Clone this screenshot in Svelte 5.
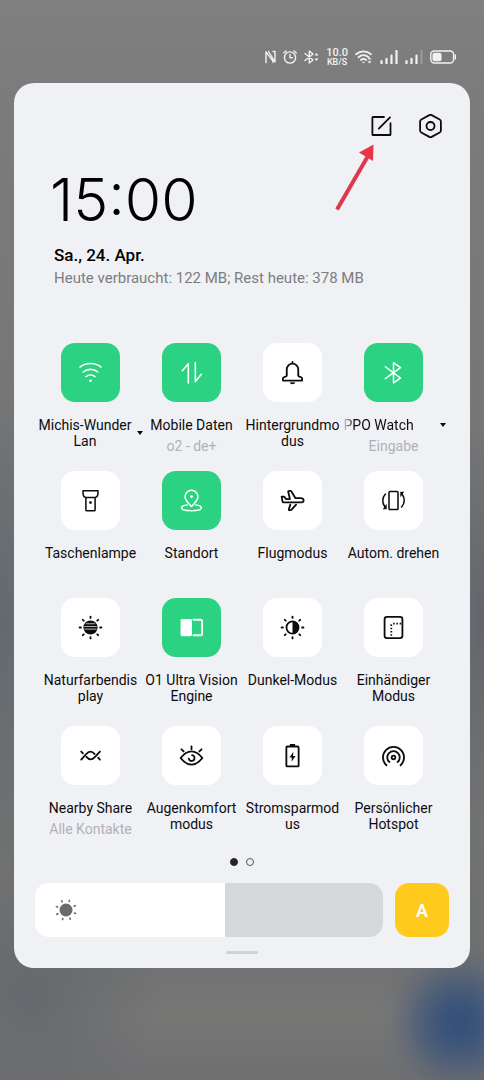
<script>
  let brightness = $state(54.6);
  let auto = $state(true);
  let tiles = $state([
    { icon: 'wifi', label: 'Michis-Wunder\nLan', on: true, menu: true },
    { icon: 'data', label: 'Mobile Daten', sub: 'o2 - de+', on: true },
    { icon: 'bell', label: 'Hintergrundmo\ndus' },
    { icon: 'bluetooth', label: 'PPO Watch', sub: 'Eingabe', on: true, menu: true, fading: true },
    { icon: 'torch', label: 'Taschenlampe' },
    { icon: 'location', label: 'Standort', on: true },
    { icon: 'plane', label: 'Flugmodus' },
    { icon: 'rotate', label: 'Autom. drehen' },
    { icon: 'natural', label: 'Naturfarbendis\nplay' },
    { icon: 'vision', label: 'O1 Ultra Vision\nEngine', on: true },
    { icon: 'dark', label: 'Dunkel-Modus' },
    { icon: 'onehand', label: 'Einhändiger\nModus' },
    { icon: 'nearby', label: 'Nearby Share', sub: 'Alle Kontakte' },
    { icon: 'eye', label: 'Augenkomfort\nmodus' },
    { icon: 'battery', label: 'Stromsparmod\nus' },
    { icon: 'hotspot', label: 'Persönlicher\nHotspot' }
  ]);
  const rays = [0, 45, 90, 135, 180, 225, 270, 315];
</script>

{#snippet glyph(name)}
  <svg class="glyph" viewBox="0 0 24 24" aria-hidden="true">
    {#if name === 'wifi'}
      <path d="M1 6.3C7.3 1.5 16.7 1.5 23 6.3M4.4 11.5C8.7 7.8 15.3 7.8 19.6 11.5M7.3 16.3C10 14 14 14 16.7 16.3" />
      <circle class="solid" cx="12" cy="20.6" r="1.4" />
    {:else if name === 'data'}
      <path d="M2.4 10.2 8.7 2.8V23M16 1.7V21.6L22.2 13.8" />
    {:else if name === 'bell'}
      <path class="thick" d="M6 8.7v6.6c-.4 1.6-4 .9-4 2.9v2.2h20v-2.2c0-2-3.6-1.3-4-2.9V8.7a6 6 0 0 0-12 0zM12 1v1.5M10.5 23q1.5.8 3 0" />
    {:else if name === 'bluetooth'}
      <path d="M3.5 6 19.3 17.8 12 22.8V1.8L19.3 6.8 3.5 18.4" />
    {:else if name === 'torch'}
      <path d="M4.2 1.8h15.6v2.4c0 2.6-1.2 4.6-3.4 4.6H7.6c-2.2 0-3.4-2-3.4-4.6zM7.2 9.4v12.4q0 1 1 1h7.6q1 0 1-1V9.4" />
      <circle class="solid" cx="12" cy="14.2" r="1.5" />
    {:else if name === 'location'}
      <path d="M12 18.2C9.5 15.7 5.3 12 5.3 8.1a6.7 6.7 0 0 1 13.4 0C18.7 12 14.5 15.7 12 18.2zM7.5 16.8C4 17.2 1.7 18.3 1.7 19.7c0 1.8 4.6 3 10.3 3s10.3-1.2 10.3-3c0-1.4-2.3-2.5-5.8-2.9" />
      <circle class="solid" cx="12" cy="8" r="1.5" />
    {:else if name === 'plane'}
      <path class="thick" d="M.7 8h2.5l2.2 2.5H9.3L7.6 3.2Q7.4 2 8.6 2h1.3q.7 0 1 .6l4.2 7h5.4q2.9 0 3.1 2.3.1 2-2.2 2H3Q1.8 14 1.5 12.7zM9.7 16.3 8.2 21.2q-.2.9.7.9h1.2q.5 0 .8-.4l4.8-5.4" />
    {:else if name === 'rotate'}
      <rect x="7.3" y="2.5" width="9.4" height="19" rx="1" />
      <path d="M3.6 5.2C0 9 0 14.5 2.8 18.3M20.4 18.8C24 15 24 9.5 21.2 5.7" />
      <path class="solid" d="M4.9 15.5v5.6H.8zM19.1 8.5V2.9h4.1z" />
    {:else if name === 'natural'}
      <circle class="solid" cx="12" cy="12" r="7.4" />
      <path class="stripes" d="M7.5 8.1h9M6 11h12M6 13.7h12" />
      {#each rays as r}<path class="thick" d="M12 .6v1.4" transform={`rotate(${r} 12 12)`} />{/each}
    {:else if name === 'vision'}
      <rect class="solid" x=".6" y="3" width="11.9" height="18" rx="1.5" />
      <path class="thick" d="M14 3.9h7.4q1.7 0 1.7 1.7v12.8q0 1.7-1.7 1.7H14" />
    {:else if name === 'dark'}
      <circle class="thick" cx="12" cy="12" r="6.3" />
      <path class="solid" d="M12 5.7a6.3 6.3 0 0 1 0 12.6z" />
      {#each rays as r}<path class="thick" d="M12 .6v1.4" transform={`rotate(${r} 12 12)`} />{/each}
    {:else if name === 'onehand'}
      <rect class="thick" x="2.7" y=".9" width="18.6" height="22.2" rx="2.5" />
      <path class="dots" d="M20 8h-8.7q-1.6 0-1.6 1.6V22" />
    {:else if name === 'nearby'}
      <path class="thick" d="M2.3 16.2 7.5 10.5Q12 5.6 16.2 10.4M7.8 13.5Q12 18.4 16.5 13.6L21.8 7.9M2.3 7.9l1.8 1.9M20 14.3l1.8 1.9" />
    {:else if name === 'eye'}
      <path class="thick" d="M.7 14.6C4.5 9.7 8 7.7 12 7.7s7.5 2 11.3 6.9C19.5 19.5 16 21.5 12 21.5S4.5 19.5.7 14.6zM12.6 11.7a3 3 0 1 1-3.4 3.5" />
      <path class="thick" d="M12 2.4v3M1.5 5.5l2.3 2.3M22.5 5.5 20.2 7.8" />
    {:else if name === 'battery'}
      <rect class="thick" x="5.6" y="2.6" width="12.8" height="20.8" rx="1" />
      <path class="solid" d="M9.3 0h5.4v2.5H9.3zM13 8.2l-4.2 6h2.6l-.5 4.3 4.3-6h-2.7z" />
    {:else if name === 'hotspot'}
      <path class="thick" d="M4.6 22.2a11 11 0 1 1 14.8 0M7.7 18.8a6.5 6.5 0 1 1 8.6 0" />
      <circle class="thick" cx="12" cy="14" r="1.9" />
    {/if}
  </svg>
{/snippet}

<main class="screen">
  <div class="status">
    <svg width="11" height="14" viewBox="0 0 11 14" aria-hidden="true"><path d="M1 12.5V1.8L8 11V12.5M3.5 1.5 10 12V1.5H8" /></svg>
    <svg width="14" height="14" viewBox="0 0 14 14" aria-hidden="true"><circle cx="7" cy="7.5" r="5.6" /><path d="M7 4.5v3.3h2.3M.8 2.8 3 1M13.2 2.8 11 1" /></svg>
    <svg width="15" height="14" viewBox="0 0 15 14" aria-hidden="true"><path d="M1 3.5 9 10 5.3 13V1L9 4 1 10.5" /><path class="fill" d="M10.5 5.5 12.5 3l2 2.500zM10.5 8.5l2 2.5 2-2.500z" /></svg>
    <span class="rate"><b>10.0</b><small>KB/S</small></span>
    <svg class="wifi" width="18" height="14" viewBox="0 0 18 14" aria-hidden="true"><path d="M1 4.2C5.5.3 11.5.3 16 4.2M3.5 7.2C6.5 4.6 10.5 4.6 13.5 7.2M6 10C7.5 8.7 9.5 8.7 11 10" /><path class="fill" d="M7 11.8h3L8.5 13.500zM12.5 9.5l2-2.2 2 2.200zM12.5 11.3l2 2.2 2-2.200z" /></svg>
    <svg width="18" height="14" viewBox="0 0 18 14" aria-hidden="true"><path class="bars" d="M1.5 11v2.5M6.5 8.8v4.7M11.5 5.5v8M16.5 1v12.5" /></svg>
    <svg width="18" height="14" viewBox="0 0 18 14" aria-hidden="true"><path class="bars" d="M1.5 11v2.5M6.5 8.8v4.7M11.5 5.5v8" /><path class="bars faint" d="M16.5 1v12.5" /></svg>
    <svg width="26" height="14" viewBox="0 0 26 14" aria-hidden="true"><rect x=".8" y="1" width="22.8" height="12" rx="3.5" /><rect class="fill" x="2.5" y="2.7" width="9" height="8.6" rx="2" /><path d="M25.3 5v4" /></svg>
  </div>

  <section class="panel">
    <header>
      <div class="actions">
        <button aria-label="Bearbeiten">
          <svg viewBox="0 0 24 24" aria-hidden="true"><path d="M14.5 3H3.5Q2.9 3 2.9 3.6V20.4Q2.9 21 3.5 21H20.4Q21 21 21 20.4V9.2M9.3 14.6 20.5 3.4" /></svg>
        </button>
        <button aria-label="Einstellungen">
          <svg viewBox="0 0 24 24" aria-hidden="true"><path d="M10.8 1.1q1.2-.6 2.4 0l8 4.4q1.2.7 1.2 2v9q0 1.3-1.2 2l-8 4.4q-1.2.6-2.4 0l-8-4.4q-1.2-.7-1.2-2v-9q0-1.3 1.2-2z" /><circle cx="12" cy="12" r="4" /></svg>
        </button>
        <svg class="pointer" viewBox="0 0 40 66" aria-hidden="true"><path d="M2 64.5 33 11" /><path class="head" d="M38.5-.5 38 16 24 7.5z" /></svg>
      </div>
      <time class="clock">15:00</time>
      <p class="date">Sa., 24. Apr.</p>
      <p class="usage">Heute verbraucht: 122 MB; Rest heute: 378 MB</p>
    </header>

    <div class="grid">
      {#each tiles as tile}
        <button class="tile" class:on={tile.on} aria-pressed={!!tile.on} onclick={() => (tile.on = !tile.on)}>
          <span class="box">{@render glyph(tile.icon)}</span>
          <span class="row" class:menu={tile.menu}>
            <span class="label" class:fading={tile.fading}>{tile.label}</span>
            {#if tile.menu}<span class="caret"></span>{/if}
          </span>
          {#if tile.sub}<span class="sub">{tile.sub}</span>{/if}
        </button>
      {/each}
    </div>

    <div class="pages"><i class="current"></i><i></i></div>

    <div class="controls">
      <label class="slider">
        <input type="range" min="0" max="100" step="0.1" bind:value={brightness} aria-label="Helligkeit" style={`--level:${brightness}%`} />
        <svg viewBox="0 0 24 24" aria-hidden="true">
          <circle cx="12" cy="12" r="6.5" />
          {#each rays as r}<path d="M12 1.8v1.2" transform={`rotate(${r + 20} 12 12)`} />{/each}
        </svg>
      </label>
      <button class="auto" aria-pressed={auto} onclick={() => (auto = !auto)}>A</button>
    </div>
    <div class="handle"></div>
  </section>
</main>

<style>
  :global(body) { margin: 0; }
  .screen {
    box-sizing: border-box;
    min-height: 100vh;
    padding: 47px 14px 112px;
    font-family: Roboto, "Liberation Sans", sans-serif;
    background:
      radial-gradient(circle at 95% 1022px, #34507a 0, #34507ae8 16px, #34507a98 38px, #34507a38 58px, #34507a10 70px, #34507a00 84px),
      radial-gradient(ellipse 130px 120px at 30px 1000px, #62656bcc, #62656b00),
      radial-gradient(ellipse 60px 240px at 0 620px, #5d676ecc, #5d676e00),
      radial-gradient(ellipse 50px 200px at 100% 620px, #5d636acc, #5d636a00),
      linear-gradient(#808080, #7b7b7b 10%, #757575 45%, #6f7070 88%, #777776 94%, #6e6f71);
  }
  button { padding: 0; border: 0; background: none; color: inherit; font: inherit; cursor: pointer; }
  svg { display: block; fill: none; stroke: currentColor; stroke-linecap: round; stroke-linejoin: round; }

  .status { display: flex; justify-content: flex-end; align-items: center; gap: 7px; height: 20px; margin-bottom: 16px; padding-right: 14px; color: #f2f2f4; }
  .status svg { stroke-width: 1.4; }
  .status .fill { fill: currentColor; stroke: none; }
  .status .wifi { stroke-width: 1.8; }
  .status .bars { stroke-width: 2.2; }
  .status .faint { opacity: .25; }
  .rate { display: flex; flex-direction: column; align-items: center; font-weight: 500; }
  .rate b { font-size: 11px; line-height: 11px; font-weight: 500; }
  .rate small { font-size: 9px; line-height: 9px; }

  .panel { padding: 31px 21px 14px; border-radius: 20px; background: #f0f1f5; color: #0c0c0e; }
  .actions { position: relative; display: flex; justify-content: flex-end; gap: 24px; padding-right: 6px; }
  .actions svg { width: 25px; height: 24px; stroke-width: 1.8; }
  .actions .pointer { position: absolute; top: 31px; right: 74px; width: 40px; height: 66px; overflow: visible; stroke: #df384d; stroke-width: 4; stroke-linecap: butt; pointer-events: none; }
  .pointer .head { fill: #e8354a; stroke: none; }
  header { margin-bottom: 54px; }
  .clock { display: block; margin: 30px 0 11px 15px; font: 350 59px/64px Inter, Roboto, sans-serif; color: #000; }
  p { margin: 0 0 0 19px; }
  .date { font-size: 17px; line-height: 24px; font-weight: 500; color: #000; }
  .usage { font-size: 15px; line-height: 22px; color: #7c7d81; }

  .grid { display: grid; grid-template-columns: repeat(4, 1fr); grid-auto-rows: 1fr; min-height: 510px; padding: 0 5px; }
  .tile { display: flex; flex-direction: column; align-items: center; min-width: 0; font-size: 14px; line-height: 16px; }
  .box { display: grid; place-items: center; width: 59px; height: 59px; margin-bottom: 15px; border-radius: 14px; background: #fff; color: #0c0c0e; }
  .on .box { background: #2bd282; color: #fff; }
  .glyph { width: 23px; height: 23px; overflow: visible; stroke-width: 1.6; }
  .glyph .solid { fill: currentColor; stroke: none; }
  .glyph .thick { stroke-width: 1.9; }
  .glyph .stripes { stroke: #bbb; stroke-width: 1; }
  .glyph .dots { stroke-width: 1.8; stroke-dasharray: 1.6 1.8; stroke-linecap: butt; }
  .row { display: flex; justify-content: center; align-items: center; gap: 5px; }
  .label { white-space: pre; text-align: center; }
  .menu .label { width: 93px; }
  .label.fading { text-align: left; text-indent: 2px; mask-image: linear-gradient(90deg, transparent, #000 12px); }
  .caret { border: 3px solid transparent; border-top: 4px solid #0c0c0e; border-bottom: 0; }
  .sub { margin-top: 5px; color: #b0b1b6; }

  .pages { display: flex; justify-content: center; gap: 8px; margin: 5px 0 17px; }
  .pages i { box-sizing: border-box; width: 8px; height: 8px; border: 1px solid #55565a; border-radius: 50%; }
  .pages .current { border-color: #252529; background: #252529; }

  .controls { display: flex; gap: 12px; }
  .slider { position: relative; flex: 1; }
  .slider input { appearance: none; display: block; width: 100%; height: 54px; margin: 0; border-radius: 14px; background: linear-gradient(90deg, #fff var(--level), #d6d7db var(--level)); cursor: pointer; }
  .slider input::-webkit-slider-thumb { appearance: none; width: 1px; height: 54px; opacity: 0; }
  .slider svg { position: absolute; top: 15px; left: 19px; width: 24px; height: 24px; color: #6b6b6d; stroke-width: 1.6; pointer-events: none; }
  .slider circle { fill: currentColor; stroke: none; }
  .auto { width: 54px; height: 54px; border-radius: 14px; background: #ffca1b; color: #fff; font-size: 18px; font-weight: 600; }
  .handle { width: 32px; height: 3px; margin: 14px auto 0; border-radius: 2px; background: #d0d1d5; }
</style>
